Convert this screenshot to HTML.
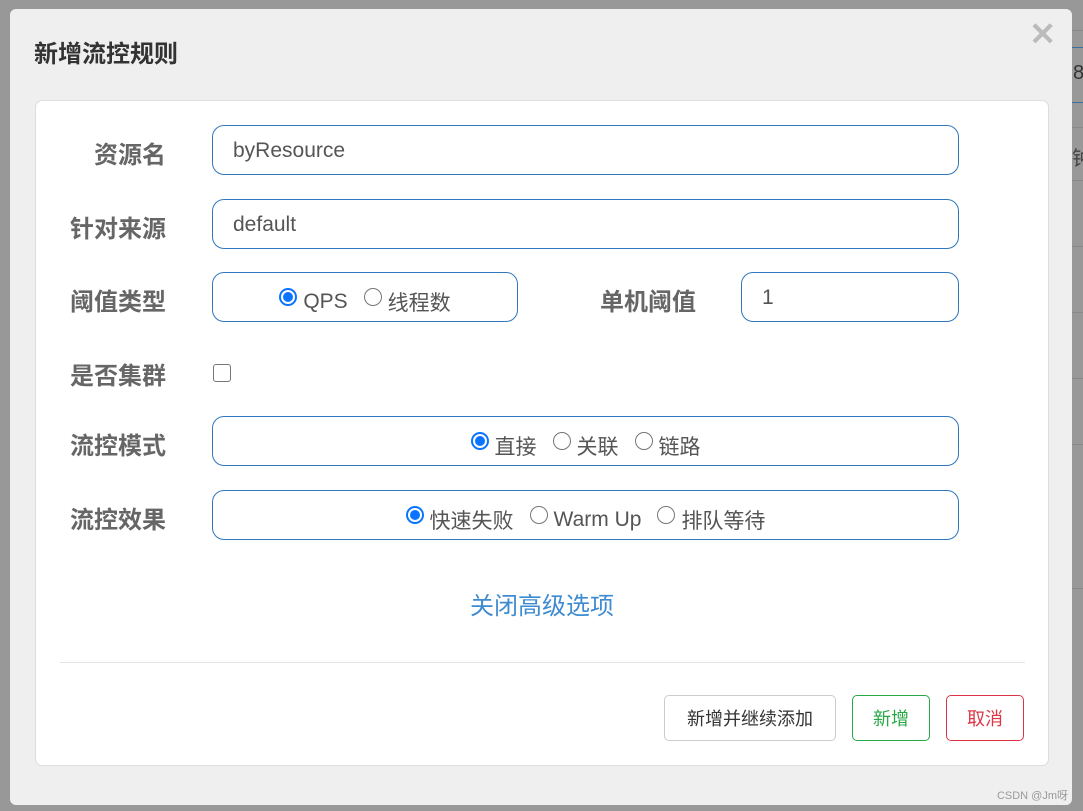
<!DOCTYPE html><html><head><meta charset="utf-8"><style>
*{box-sizing:border-box;margin:0;padding:0}
body{width:1083px;height:811px;background:#989898;position:relative;overflow:hidden;font-family:"Liberation Sans","Noto Sans CJK SC",sans-serif}
.bgl{position:absolute;left:1072px;right:0;height:1px;background:#888}
.modal{position:absolute;left:10px;top:9px;width:1062px;height:796px;background:#efefef;border-radius:6px}
.title{position:absolute;left:24px;top:25px;font-size:24px;font-weight:bold;color:#333}
.close{position:absolute;right:16px;top:6px;font-size:32px;font-weight:bold;color:#bbb}
.card{position:absolute;left:25px;top:91px;width:1014px;height:666px;background:#fff;border:1px solid #ddd;border-radius:7px}
.lab{position:absolute;font-size:24px;font-weight:bold;color:#666;text-align:right;width:130px}
.f{position:absolute;border:1px solid #2f78bd;border-radius:12px;height:50px;font-size:21px;color:#555;display:flex;align-items:center}
.f.t{padding-left:20px;padding-top:2px}
.f.r{justify-content:center;padding-top:9px}
.rd{display:inline-block;width:18px;height:18px;border:1.5px solid #767676;border-radius:50%;margin:0 6px 0 0;vertical-align:-1px;position:relative;top:-5px}
.rd.on{border:2px solid #0b74ff}
.rd.on:after{content:"";position:absolute;left:2px;top:2px;width:10px;height:10px;border-radius:50%;background:#0b74ff}
.it{margin-right:16px}
.btn{position:absolute;top:594px;height:46px;border:1px solid #ccc;border-radius:5px;font-size:18px;display:flex;align-items:center;justify-content:center;color:#333}
</style></head><body>
<div class="bgl" style="top:30px"></div><div class="bgl" style="top:47px;background:#3d6e9c"></div><div class="bgl" style="top:102px;background:#3d6e9c"></div><div class="bgl" style="top:127px"></div><div class="bgl" style="top:180px"></div><div class="bgl" style="top:246px"></div><div class="bgl" style="top:312px"></div><div class="bgl" style="top:378px"></div><div class="bgl" style="top:444px"></div><div class="bgl" style="top:588px"></div>
<div style="position:absolute;left:1073px;top:62px;font-size:20px;color:#333">8</div>
<div style="position:absolute;left:1072px;top:142px;font-size:20px;color:#444">钟</div>
<div class="modal">
<div class="title">新增流控规则</div>
<div class="close">✕</div>
<div class="card">
<div class="lab" style="left:0;top:34px">资源名</div>
<div class="f t" style="left:176px;top:24px;width:747px">byResource</div>
<div class="lab" style="left:0;top:108px">针对来源</div>
<div class="f t" style="left:176px;top:98px;width:747px">default</div>
<div class="lab" style="left:0;top:181px">阈值类型</div>
<div class="f r" style="left:176px;top:171px;width:306px"><span class="rd on"></span><span class="it">QPS</span><span class="rd"></span>线程数</div>
<div class="lab" style="left:530px;top:181px">单机阈值</div>
<div class="f t" style="left:705px;top:171px;width:218px">1</div>
<div class="lab" style="left:0;top:255px">是否集群</div>
<div style="position:absolute;left:177px;top:263px;width:18px;height:18px;border:1.5px solid #767676;border-radius:3px"></div>
<div class="lab" style="left:0;top:325px">流控模式</div>
<div class="f r" style="left:176px;top:315px;width:747px"><span class="rd on"></span><span class="it">直接</span><span class="rd"></span><span class="it">关联</span><span class="rd"></span>链路</div>
<div class="lab" style="left:0;top:399px">流控效果</div>
<div class="f r" style="left:176px;top:389px;width:747px"><span class="rd on"></span><span class="it">快速失败</span><span class="rd"></span><span class="it">Warm Up</span><span class="rd"></span>排队等待</div>
<div style="position:absolute;left:0;width:1012px;top:485px;text-align:center;font-size:24px;color:#3f8bd0">关闭高级选项</div>
<div style="position:absolute;left:24px;width:965px;top:561px;height:1px;background:#e5e5e5"></div>
<div class="btn" style="left:628px;width:172px">新增并继续添加</div>
<div class="btn" style="left:816px;width:78px;border-color:#28a745;color:#28a745">新增</div>
<div class="btn" style="left:910px;width:78px;border-color:#dc3545;color:#dc3545">取消</div>
</div>
<div style="position:absolute;right:4px;bottom:2px;font-size:11px;color:#999">CSDN @Jm呀</div>
</div>
</body></html>
